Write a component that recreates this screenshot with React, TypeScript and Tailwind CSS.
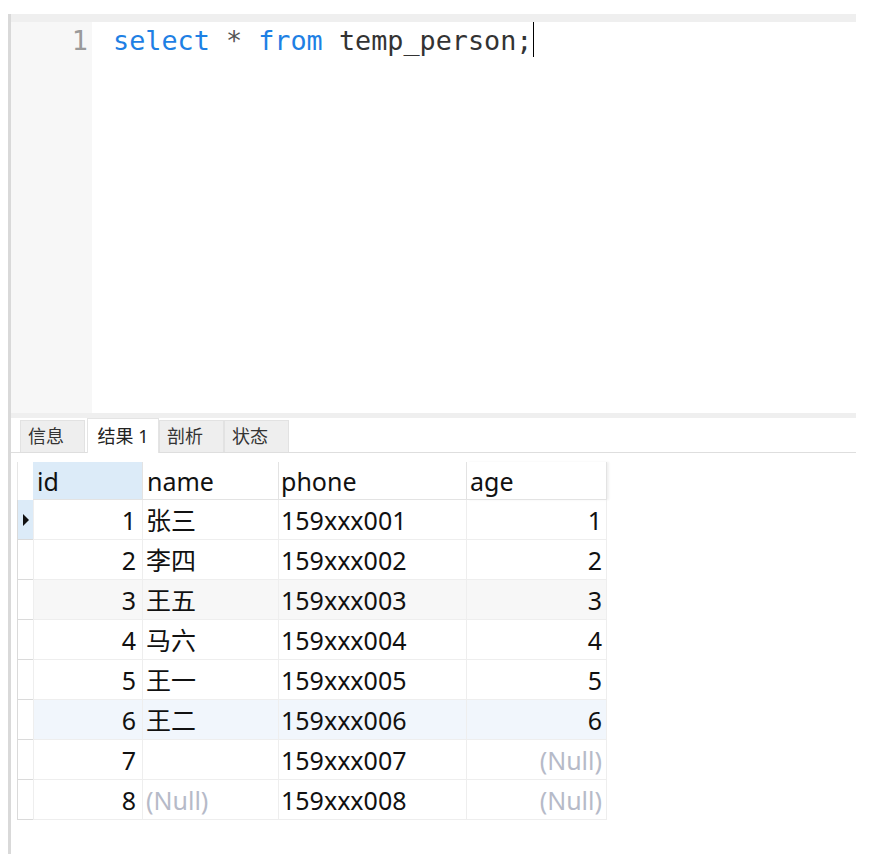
import React from 'react';

type Row = { id: number; name: string | null; phone: string; age: string | null };

const rows: Row[] = [
  { id: 1, name: '张三', phone: '159xxx001', age: '1' },
  { id: 2, name: '李四', phone: '159xxx002', age: '2' },
  { id: 3, name: '王五', phone: '159xxx003', age: '3' },
  { id: 4, name: '马六', phone: '159xxx004', age: '4' },
  { id: 5, name: '王一', phone: '159xxx005', age: '5' },
  { id: 6, name: '王二', phone: '159xxx006', age: '6' },
  { id: 7, name: '', phone: '159xxx007', age: null },
  { id: 8, name: null, phone: '159xxx008', age: null },
];

const tabs = ['信息', '结果 1', '剖析', '状态'];

const Null = () => <span className="text-[#b6bac8]">(Null)</span>;

const rowBg = (i: number) => (i === 2 ? 'bg-[#f7f7f7]' : i === 5 ? 'bg-[#f1f6fc]' : 'bg-white');

export default function App() {
  return (
    <div className="w-[886px] h-[854px] bg-white overflow-hidden pt-[14px] pl-[8px]">
      <div className="h-[840px] border-l-[3px] border-[#d9d9d9] flex flex-col">
        {/* editor */}
        <div className="w-[845px] h-[399px] border-t-[8px] border-[#efefef] flex">
          <div className="w-[81px] bg-[#f7f7f7] flex justify-end pr-[4px] font-['DejaVu_Sans_Mono',monospace] text-[26.8px] leading-[38px] text-[#9a9a9a]">
            1
          </div>
          <div className="flex-1 pl-[21px] font-['DejaVu_Sans_Mono',monospace] text-[26.8px] leading-[38px] whitespace-pre flex items-start">
            <span className="text-[#1e80e4]">select</span>
            <span className="text-[#555]"> * </span>
            <span className="text-[#1e80e4]">from</span>
            <span className="text-[#333]"> temp_person;</span>
            <span className="inline-block w-px h-[35px] bg-black" />
          </div>
        </div>
        <div className="w-[845px] h-[5px] bg-[#efefef]" />

        {/* result tabs */}
        <div className="w-[845px] h-[35px] border-b border-[#dedede] flex items-end pl-[8px] font-['Noto_Sans','Noto_Sans_CJK_SC',sans-serif] text-[18px] text-[#222]">
          {tabs.map((t, i) =>
            i === 1 ? (
              <div key={t} className="h-[35px] w-[72px] bg-white border-t border-l border-r border-[#e4e4e4] -mb-px flex items-center justify-center">
                {t}
              </div>
            ) : (
              <div
                key={t}
                className={`h-[32px] ${i === 0 ? 'w-[65px] ml-px mr-[2px]' : 'w-[65px]'} bg-[#eeeeee] border-t border-l border-r border-[#e2e2e2] flex items-center pl-[7px] text-[#333]`}
              >
                {t}
              </div>
            )
          )}
        </div>

        {/* grid */}
        <div className="mt-[9px] ml-[6px] w-fit font-['Noto_Sans','Noto_Sans_CJK_SC',sans-serif] text-[25px] text-[#111]">
          <div className="flex h-[38px]">
            <div className="w-[16px] border-l border-[#e6e6e6] bg-white" />
            <div className="w-[110px] bg-[#dcebf8] border-r border-b border-[#e3e3e3] pl-[4px] leading-[38px]">id</div>
            <div className="w-[136px] border-r border-b border-[#e3e3e3] pl-[4px] leading-[38px]">name</div>
            <div className="w-[188px] border-r border-b border-[#e3e3e3] pl-[2px] leading-[38px]">phone</div>
            <div className="w-[140px] border-r border-b border-[#e3e3e3] pl-[3px] leading-[38px] shadow-[2px_0_2px_rgba(0,0,0,0.06)]">age</div>
          </div>
          {rows.map((r, i) => (
            <div key={r.id} className={`flex h-[40px] ${rowBg(i)}`}>
              <div
                className={`w-[16px] border-l border-b border-[#dadada] flex items-center justify-center ${i === 0 ? 'bg-[#dcebf8]' : 'bg-white'}`}
              >
                {i === 0 && (
                  <svg width="6" height="12" viewBox="0 0 6 12">
                    <path d="M0 0 L6 6 L0 12 Z" fill="#111" />
                  </svg>
                )}
              </div>
              <div className="w-[110px] border-l border-r border-b border-[#eeeeee] text-right pr-[6px] leading-[40px]">{r.id}</div>
              <div className="w-[136px] border-r border-b border-[#eeeeee] pl-[3px] leading-[40px]">
                {r.name === null ? <Null /> : r.name}
              </div>
              <div className="w-[188px] border-r border-b border-[#eeeeee] pl-[2px] leading-[40px]">{r.phone}</div>
              <div className="w-[140px] border-r border-b border-[#eeeeee] text-right pr-[4px] leading-[40px]">
                {r.age === null ? <Null /> : r.age}
              </div>
            </div>
          ))}
        </div>
      </div>
    </div>
  );
}
